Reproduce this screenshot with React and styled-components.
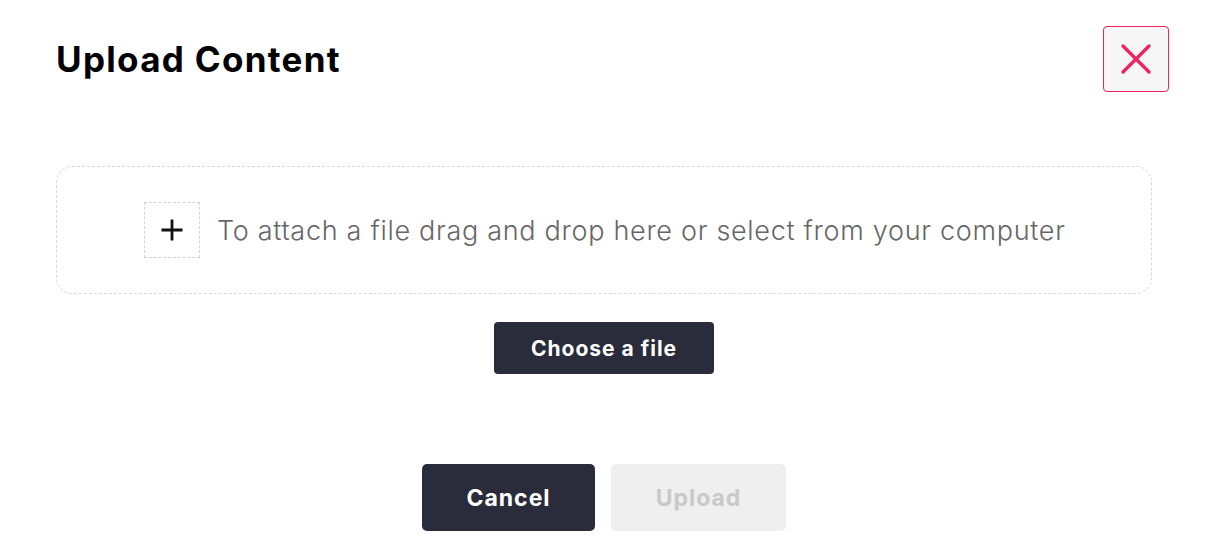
import React from "react";
import styled, { createGlobalStyle } from "styled-components";

const Global = createGlobalStyle`
  html, body { margin: 0; padding: 0; background: #fff; }
  body { font-family: "Inter", "Noto Sans", sans-serif; }
  * { box-sizing: border-box; }
`;

const Modal = styled.div`
  width: 1206px;
  height: 550px;
  padding: 26px 37px 0 56px;
  display: flex;
  flex-direction: column;
`;

const Header = styled.div`
  display: flex;
  align-items: center;
  justify-content: space-between;
  height: 66px;
`;

const Title = styled.h1`
  margin: 0;
  font-size: 35px;
  font-weight: 700;
  color: #000;
  letter-spacing: 1.3px;
`;

const CloseButton = styled.button`
  width: 66px;
  height: 66px;
  border: 1px solid #f0245a;
  border-radius: 4px;
  background: #f6f6f6;
  display: flex;
  align-items: center;
  justify-content: center;
  padding: 0;
  cursor: pointer;
`;

const Body = styled.div`
  margin-top: 74px;
  margin-right: 17px;
  display: flex;
  flex-direction: column;
  align-items: center;
`;

const DropZone = styled.div`
  width: 100%;
  height: 128px;
  border: 1px dashed #d9d9d9;
  border-radius: 16px;
  display: flex;
  align-items: center;
  padding-left: 87px;
  gap: 17px;
`;

const PlusBox = styled.div`
  width: 56px;
  height: 56px;
  border: 1px dashed #d4d4d4;
  display: flex;
  align-items: center;
  justify-content: center;
`;

const DropText = styled.span`
  font-size: 27px;
  font-weight: 300;
  color: #666;
  letter-spacing: 0.7px;
  white-space: nowrap;
`;

const Button = styled.button`
  border: none;
  border-radius: ${(p) => p.$radius || 4}px;
  background: ${(p) => (p.$disabled ? "#efefef" : "#2a2b3b")};
  color: ${(p) => (p.$disabled ? "#c9c9c9" : "#fff")};
  font-family: "Inter", "Noto Sans", sans-serif;
  font-weight: 700;
  font-size: ${(p) => p.$size || 21}px;
  letter-spacing: 1px;
  width: ${(p) => p.$w}px;
  height: ${(p) => p.$h}px;
  display: flex;
  align-items: center;
  justify-content: center;
  padding: 0;
  cursor: ${(p) => (p.$disabled ? "default" : "pointer")};
`;

const ChooseWrap = styled.div`
  margin-top: 28px;
`;

const Footer = styled.div`
  margin-top: 90px;
  margin-right: 17px;
  display: flex;
  justify-content: center;
  gap: 16px;
`;

export default function App() {
  return (
    <>
      <Global />
      <Modal>
        <Header>
          <Title>Upload Content</Title>
          <CloseButton aria-label="Close">
            <svg width="30" height="30" viewBox="0 0 30 30" fill="none">
              <path d="M2 2L28 28M28 2L2 28" stroke="#f0245a" strokeWidth="3.2" strokeLinecap="round" />
            </svg>
          </CloseButton>
        </Header>
        <Body>
          <DropZone>
            <PlusBox>
              <svg width="24" height="24" viewBox="0 0 24 24" fill="none">
                <path d="M12 1.5V22.5M1.5 12H22.5" stroke="#111" strokeWidth="2.8" strokeLinecap="butt" />
              </svg>
            </PlusBox>
            <DropText>To attach a file drag and drop here or select from your computer</DropText>
          </DropZone>
          <ChooseWrap>
            <Button $w={220} $h={52}>Choose a file</Button>
          </ChooseWrap>
        </Body>
        <Footer>
          <Button $w={173} $h={67} $radius={5} $size={23}>Cancel</Button>
          <Button $w={175} $h={67} $radius={5} $size={23} $disabled>Upload</Button>
        </Footer>
      </Modal>
    </>
  );
}
